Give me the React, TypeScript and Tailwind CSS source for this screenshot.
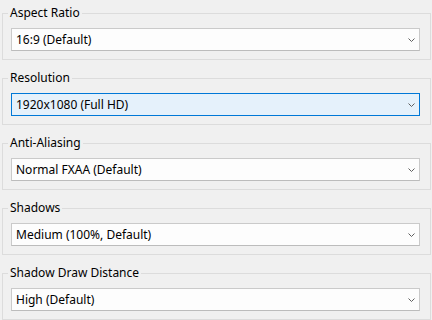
import React from 'react'

type Setting = {
  label: string
  value: string
  focused?: boolean
}

const settings: Setting[] = [
  { label: 'Aspect Ratio', value: '16:9 (Default)' },
  { label: 'Resolution', value: '1920x1080 (Full HD)', focused: true },
  { label: 'Anti-Aliasing', value: 'Normal FXAA (Default)' },
  { label: 'Shadows', value: 'Medium (100%, Default)' },
  { label: 'Shadow Draw Distance', value: 'High (Default)' },
]

const Chevron = () => (
  <svg width="7" height="4" viewBox="0 0 7 4" className="shrink-0">
    <path d="M0.5 0.5 L3.5 3.5 L6.5 0.5" fill="none" stroke="#5f5f5f" strokeWidth="1" />
  </svg>
)

const Combo = ({ value, focused }: { value: string; focused?: boolean }) => (
  <div
    className={
      focused
        ? 'h-[23px] flex items-center justify-between pl-[4px] pr-[4px] border border-[#0078d7] bg-[#e5f1fb]'
        : 'h-[23px] flex items-center justify-between pl-[4px] pr-[4px] border border-[#cacaca] border-b-[#bcbcbc] bg-[#fdfdfd]'
    }
  >
    <span className="leading-none">{value}</span>
    <Chevron />
  </div>
)

const Group = ({ label, value, focused }: Setting) => (
  <fieldset className="ml-[2px] w-[429px] border border-[#dcdcdc] pl-[8px] pr-[10px] pt-[7px] pb-[8px]">
    <legend className="-ml-[3px] px-[2px] leading-[16px]">{label}</legend>
    <Combo value={value} focused={focused} />
  </fieldset>
)

export default function App() {
  return (
    <div className="w-[432px] h-[320px] overflow-hidden bg-[#f0f0f0] text-black text-[12px] font-['Noto_Sans','Open_Sans',sans-serif] pt-[5px] flex flex-col gap-[10px]">
      {settings.map((s) => (
        <Group key={s.label} {...s} />
      ))}
    </div>
  )
}
